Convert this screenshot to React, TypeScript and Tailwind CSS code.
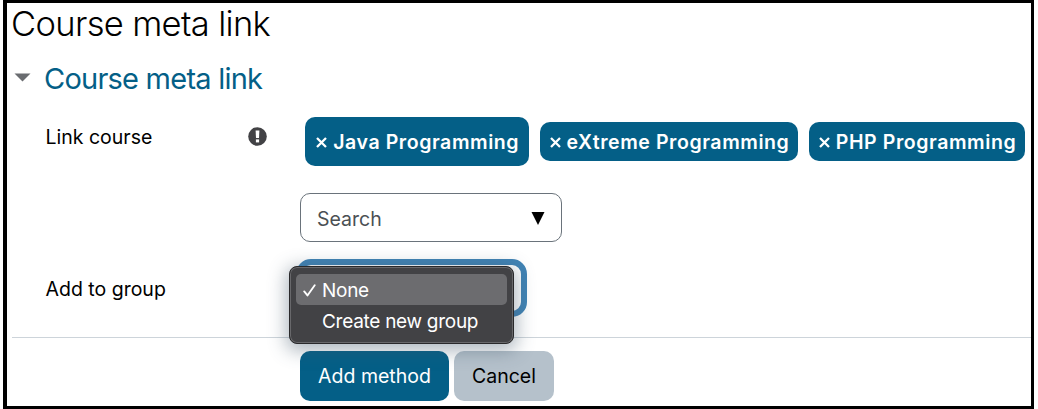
import type { ReactNode } from "react";

function Label({ children }: { children: ReactNode }) {
  return <span className="whitespace-nowrap text-[19.5px] leading-6">{children}</span>;
}

function Chip({ name, className }: { name: string; className: string }) {
  return (
    <button
      type="button"
      className={`flex shrink-0 items-center justify-center whitespace-nowrap rounded-[10px] bg-[#045f87] pl-px text-[19.5px] font-semibold leading-6 tracking-[0.58px] text-white ${className}`}
    >
      <svg className="mr-[6px] mt-[2px] h-[11px] w-[11px]" viewBox="0 0 11 11" fill="none" stroke="currentColor" strokeWidth="2.3">
        <path d="M1 1 10 10M10 1 1 10" />
      </svg>
      {name}
    </button>
  );
}

export default function App() {
  return (
    <div className="h-[409px] w-[1038px] overflow-hidden bg-white pl-[3px] pr-1 font-['Inter',sans-serif] text-black">
      <main className="flex h-[409px] flex-col border-[3px] border-l-4 border-black bg-white">
        <h1 className="h-[41px] whitespace-nowrap pl-[4px] text-[34.5px] font-light leading-[41px] tracking-[-0.66px]">Course meta link</h1>

        <div className="flex h-[69px] items-center pl-[7px]">
          <svg className="mt-[-2px] h-[9px] w-[17px]" viewBox="0 0 17 9" fill="#6a6c70">
            <path d="M.5 .5h16L8.5 8.5Z" />
          </svg>
          <h2 className="ml-[13px] whitespace-nowrap text-[29px] leading-9 tracking-[-0.77px] text-[#045f87]">Course meta link</h2>
        </div>

        <div className="flex h-[57px] items-center pl-[38.5px]">
          <div className="flex w-[253.5px] items-center justify-between pb-[10px] pr-[32px]">
            <Label>Link course</Label>
            <svg className="h-[19px] w-[19px]" viewBox="0 0 19 19">
              <circle cx="9.5" cy="9.5" r="9.3" fill="#424245" />
              <path d="M7.6 3.5h3.8l-.4 7.4H8Z" fill="#fff" />
              <rect x="7.9" y="12.4" width="3.2" height="3" fill="#fff" />
            </svg>
          </div>
          <div className="ml-[6.4px] flex items-center">
            <Chip name="Java Programming" className="h-[49px] w-[223.6px]" />
            <Chip name="eXtreme Programming" className="ml-[11px] h-[39px] w-[258px]" />
            <Chip name="PHP Programming" className="ml-[11px] h-[39px] w-[216px]" />
          </div>
        </div>

        <div className="flex h-[89px] items-end pb-[17px] pl-[293px]">
          <div className="flex h-[49px] w-[262px] items-center justify-between rounded-[10px] border-[1.5px] border-[#6a737b] px-4 text-[19.5px] text-[#4b5054]">
            <span className="pt-1">Search</span>
            <svg className="mt-px h-[13px] w-[14px]" viewBox="0 0 14 13">
              <path d="M.5 0h13L7 13Z" fill="#000" />
            </svg>
          </div>
        </div>

        <div className="flex h-[78px] items-start pl-[38.5px]">
          <div className="w-[254.5px] pt-[18px]">
            <Label>Add to group</Label>
          </div>
          <div className="relative ml-[-4px] h-[58px] w-[231px] rounded-[15px] border-[6px] border-[#4083b5] bg-white">
            <div className="absolute left-[-13px] top-[1px] z-10 h-[78px] w-[225px] rounded-[8px] border border-[#29292b] bg-[#424245] px-[6px] pt-[7px] text-[19px] tracking-[-0.28px] text-white shadow-[0_4px_18px_3px_rgba(65,85,105,0.42),inset_0_0_0_1px_#68686b]">
              <div className="flex h-[31px] items-center rounded-[5px] bg-[#6c6c6f] pl-[7px]">
                <svg className="mt-px h-[13px] w-[13px]" viewBox="0 0 14 14" fill="none" stroke="currentColor" strokeWidth="2" strokeLinecap="round" strokeLinejoin="round">
                  <path d="M1.3 8 4.8 12.3 12.6 1.3" />
                </svg>
                <span className="ml-[6px] pt-[4px]">None</span>
              </div>
              <div className="flex h-8 items-center whitespace-nowrap pl-[26px] pt-[3px]">Create new group</div>
            </div>
          </div>
        </div>
        <hr className="ml-[5px] border-t border-[#cdd4da]" />

        <div className="flex gap-[5px] pl-[293px] pt-[13px] text-[19.5px]">
          <button type="button" className="h-[50px] w-[149px] whitespace-nowrap rounded-[10px] bg-[#045f87] pt-[2px] text-white">Add method</button>
          <button type="button" className="h-[50px] w-[100px] rounded-[10px] bg-[#b5c1cb] pt-[2px] text-black">Cancel</button>
        </div>
      </main>
    </div>
  );
}
